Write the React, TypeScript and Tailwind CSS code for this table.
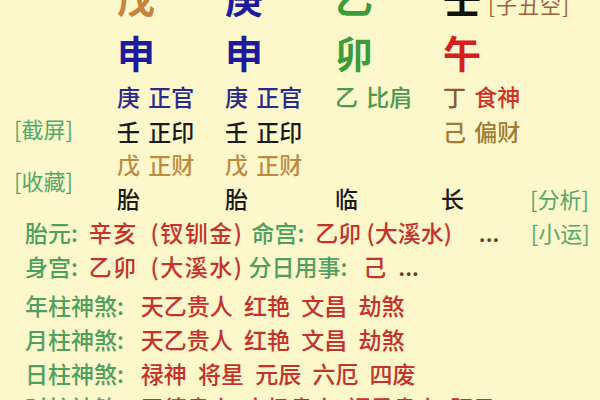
import React from "react";

const cell = "w-[108px] shrink-0";
const G = "text-[#4f9f5f]";
const R = "text-[#c4322b]";

export default function App() {
  return (
    <div className="w-[600px] h-[400px] overflow-hidden bg-[#fcf8cc] font-['Noto_Sans_CJK_SC','Noto_Sans',sans-serif]">
      <div className="mt-[-31px] flex flex-col">
        {/* Row A: heavenly stems */}
        <div className="flex h-[55px] items-center pl-[117px] text-[38px] font-bold leading-none">
          <div className="w-[108px] text-[#c8843c]">戊</div>
          <div className="w-[110px] text-[#1c1c9c]">庚</div>
          <div className="w-[108px] text-[#3c9c3c]">乙</div>
          <div className="flex items-end gap-[7px] text-[#111]">
            <span>壬</span>
            <span className="text-[21px] font-normal text-[#a0603a] mb-[1px] [word-spacing:2px] tracking-[1px]">[子丑空]</span>
          </div>
        </div>
        {/* Row B: earthly branches */}
        <div className="flex h-[55px] items-center pl-[117px] text-[38px] font-bold leading-none">
          <div className="w-[108px] text-[#1c1c9c]">申</div>
          <div className="w-[110px] text-[#1c1c9c]">申</div>
          <div className="w-[108px] text-[#3c9c3c]">卯</div>
          <div className="text-[#d42020]">午</div>
        </div>
        {/* Section: hidden stems + labels */}
        <div className="flex">
          <div className="w-[117px] shrink-0 flex flex-col pt-[37px] gap-[27px] pl-[14px] text-[22px] leading-[25px] text-[#55a868]">
            <span>[截屏]</span>
            <span>[收藏]</span>
          </div>
          <div className="flex flex-col text-[23px] font-medium leading-none [word-spacing:3px]">
            <div className="flex h-[35px] items-center">
              <div className={`${cell} text-[#2a2a8c]`}>庚 正官</div>
              <div className="w-[110px] shrink-0 text-[#2a2a8c]">庚 正官</div>
              <div className={`${cell} text-[#4a9a4a]`}>乙 比肩</div>
              <div className="shrink-0"><span className="text-[#8a5a2a]">丁 </span><span className="text-[#d03028]">食神</span></div>
            </div>
            <div className="flex h-[34px] items-center text-[#1a1a1a]">
              <div className={cell}>壬 正印</div>
              <div className="w-[110px] shrink-0">壬 正印</div>
              <div className={cell}></div>
              <div className="shrink-0 text-[#a07a30]">己 偏财</div>
            </div>
            <div className="flex h-[33px] items-center text-[#bf8a3c]">
              <div className={cell}>戊 正财</div>
              <div className="w-[110px] shrink-0">戊 正财</div>
            </div>
            <div className="flex h-[34px] items-center text-[#1a1a1a]">
              <div className={cell}>胎</div>
              <div className="w-[110px] shrink-0">胎</div>
              <div className="w-[106px] shrink-0">临</div>
              <div className="w-[89px] shrink-0">长</div>
              <div className="text-[22px] font-normal text-[#55a868] [word-spacing:0px]">[分析]</div>
            </div>
          </div>
        </div>
        {/* Info rows */}
        <div className="flex flex-col pl-[25px] text-[23px] font-medium leading-none [word-spacing:6px]">
          <div className="flex h-[34px] items-center whitespace-nowrap">
            <span className={`${G} mr-[11px]`}>胎元:</span>
            <span className={`${R} tracking-[1.5px]`}>辛亥 (钗钏金)</span>
            <span className={`${G} ml-[8px] mr-[11px]`}>命宫:</span>
            <span className={`${R} [word-spacing:0px]`}>乙卯 (大溪水)</span>
            <span className="text-[#6a3a2a] ml-[27px] w-[52px] shrink-0">...</span>
            <span className="text-[22px] font-normal text-[#55a868] [word-spacing:0px]">[小运]</span>
          </div>
          <div className="flex h-[34px] items-center whitespace-nowrap">
            <span className={`${G} mr-[11px]`}>身宫:</span>
            <span className={`${R} tracking-[1.5px]`}>乙卯 (大溪水)</span>
            <span className={`${G} ml-[5px] mr-[16px]`}>分日用事:</span>
            <span className={R}>己</span>
            <span className="text-[#6a3a2a] ml-[12px]">...</span>
          </div>
          <div className="mt-[5px] flex h-[34px] items-center whitespace-nowrap">
            <span className={`${G} mr-[17px]`}>年柱神煞:</span>
            <span className={R}>天乙贵人 红艳 文昌 劫煞</span>
          </div>
          <div className="flex h-[34px] items-center whitespace-nowrap">
            <span className={`${G} mr-[17px]`}>月柱神煞:</span>
            <span className={R}>天乙贵人 红艳 文昌 劫煞</span>
          </div>
          <div className="flex h-[34px] items-center whitespace-nowrap">
            <span className={`${G} mr-[17px]`}>日柱神煞:</span>
            <span className={R}>禄神 将星 元辰 六厄 四废</span>
          </div>
          <div className="flex h-[34px] items-center whitespace-nowrap">
            <span className={`${G} mr-[17px]`}>时柱神煞:</span>
            <span className={R}>天德贵人 太极贵人 福星贵人 驿马</span>
          </div>
        </div>
      </div>
    </div>
  );
}
